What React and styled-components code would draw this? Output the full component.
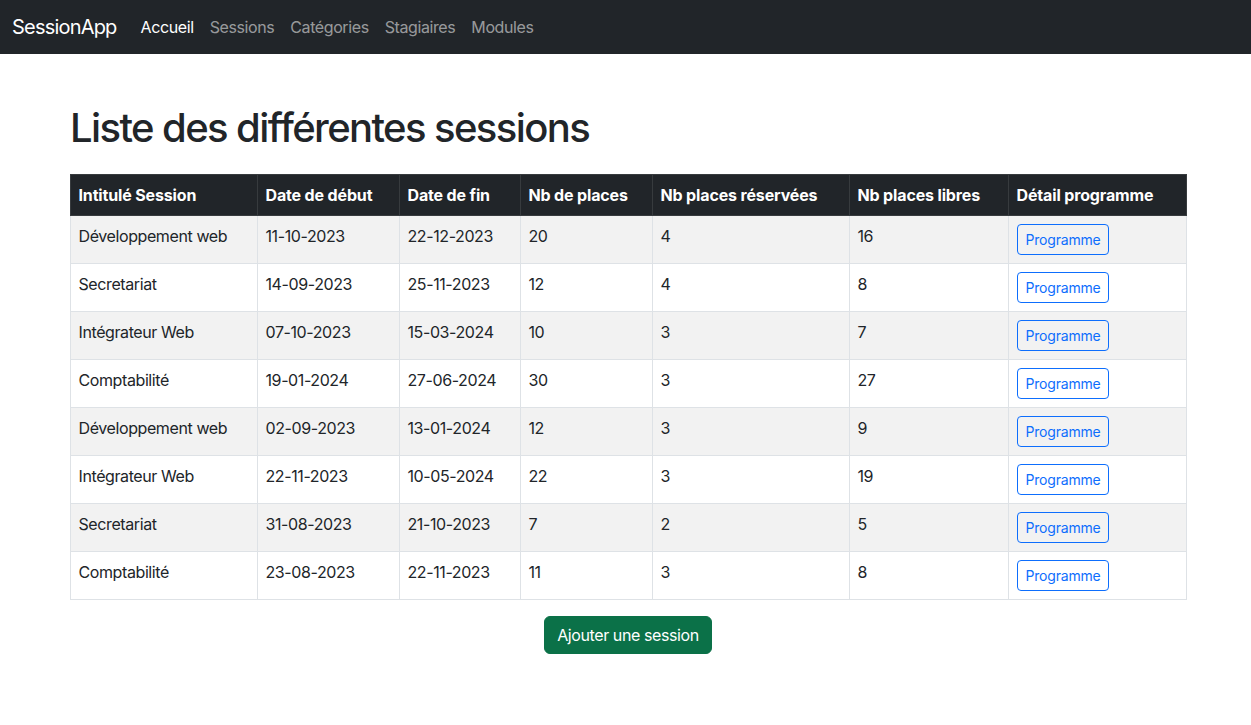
import React from "react";
import styled, { createGlobalStyle } from "styled-components";

const Global = createGlobalStyle`
  html, body { margin: 0; padding: 0; background: #fff; }
  body {
    font-family: Inter, "Noto Sans", "Liberation Sans", sans-serif;
    font-size: 16px;
    line-height: 1.5;
    color: #212529;
  }
  * { box-sizing: border-box; }
`;

const Navbar = styled.nav`
  height: 54px;
  background: #212529;
  display: flex;
  align-items: center;
  padding: 0 12px;
`;

const Brand = styled.a`
  color: #fff;
  font-size: 20px;
  line-height: 30px;
  letter-spacing: -0.8px;
  margin-right: 16px;
  text-decoration: none;
`;

const NavList = styled.div`
  display: flex;
`;

const NavLink = styled.a`
  padding: 8px;
  color: ${(p) => (p.$active ? "#fff" : "rgba(255,255,255,0.55)")};
  text-decoration: none;
  font-size: 16px;
  letter-spacing: -0.4px;
`;

const Container = styled.main`
  width: 1116px;
  margin-left: 70px;
  padding-top: 50px;
  display: flex;
  flex-direction: column;
  align-items: center;
`;

const Title = styled.h1`
  align-self: flex-start;
  font-size: 40px;
  font-weight: 500;
  line-height: 1.2;
  letter-spacing: -1.6px;
  margin: 0 0 22px;
`;

const Table = styled.table`
  width: 100%;
  border-collapse: collapse;
  table-layout: fixed;
  margin-bottom: 16px;
`;

const Th = styled.th`
  background: #212529;
  color: #fff;
  font-weight: 700;
  text-align: left;
  padding: 8px;
  border: 1px solid #373b3e;
  white-space: nowrap;
  letter-spacing: -0.15px;
`;

const Row = styled.tr`
  background: ${(p) => (p.$striped ? "#f2f2f2" : "#fff")};
`;

const Td = styled.td`
  padding: 8px;
  border: 1px solid #dee2e6;
  height: 48px;
  vertical-align: top;
  letter-spacing: -0.4px;
`;

const OutlineButton = styled.button`
  font-family: inherit;
  font-size: 14px;
  line-height: 1.5;
  letter-spacing: -0.2px;
  padding: 4px 8px;
  color: #0d6efd;
  background: transparent;
  border: 1px solid #0d6efd;
  border-radius: 4px;
  cursor: pointer;
`;

const AddButton = styled.button`
  font-family: inherit;
  font-size: 16px;
  line-height: 1.5;
  letter-spacing: -0.4px;
  padding: 6px 12px;
  color: #fff;
  background: #0b7148;
  border: 1px solid #0b7148;
  border-radius: 6px;
  cursor: pointer;
`;

const cols = [187, 142, 121, 132, 197, 159, 178];
const headers = [
  "Intitulé Session",
  "Date de début",
  "Date de fin",
  "Nb de places",
  "Nb places réservées",
  "Nb places libres",
  "Détail programme",
];

const sessions = [
  ["Développement web", "11-10-2023", "22-12-2023", "20", "4", "16"],
  ["Secretariat", "14-09-2023", "25-11-2023", "12", "4", "8"],
  ["Intégrateur Web", "07-10-2023", "15-03-2024", "10", "3", "7"],
  ["Comptabilité", "19-01-2024", "27-06-2024", "30", "3", "27"],
  ["Développement web", "02-09-2023", "13-01-2024", "12", "3", "9"],
  ["Intégrateur Web", "22-11-2023", "10-05-2024", "22", "3", "19"],
  ["Secretariat", "31-08-2023", "21-10-2023", "7", "2", "5"],
  ["Comptabilité", "23-08-2023", "22-11-2023", "11", "3", "8"],
];

export default function App() {
  return (
    <>
      <Global />
      <Navbar>
        <Brand href="#">SessionApp</Brand>
        <NavList>
          <NavLink $active href="#">Accueil</NavLink>
          <NavLink href="#">Sessions</NavLink>
          <NavLink href="#">Catégories</NavLink>
          <NavLink href="#">Stagiaires</NavLink>
          <NavLink href="#">Modules</NavLink>
        </NavList>
      </Navbar>
      <Container>
        <Title>Liste des différentes sessions</Title>
        <Table>
          <colgroup>
            {cols.map((w, i) => (
              <col key={i} style={{ width: w }} />
            ))}
          </colgroup>
          <thead>
            <tr>
              {headers.map((h) => (
                <Th key={h}>{h}</Th>
              ))}
            </tr>
          </thead>
          <tbody>
            {sessions.map((s, i) => (
              <Row key={i} $striped={i % 2 === 0}>
                {s.map((c, j) => (
                  <Td key={j}>{c}</Td>
                ))}
                <Td>
                  <OutlineButton>Programme</OutlineButton>
                </Td>
              </Row>
            ))}
          </tbody>
        </Table>
        <AddButton>Ajouter une session</AddButton>
      </Container>
    </>
  );
}
